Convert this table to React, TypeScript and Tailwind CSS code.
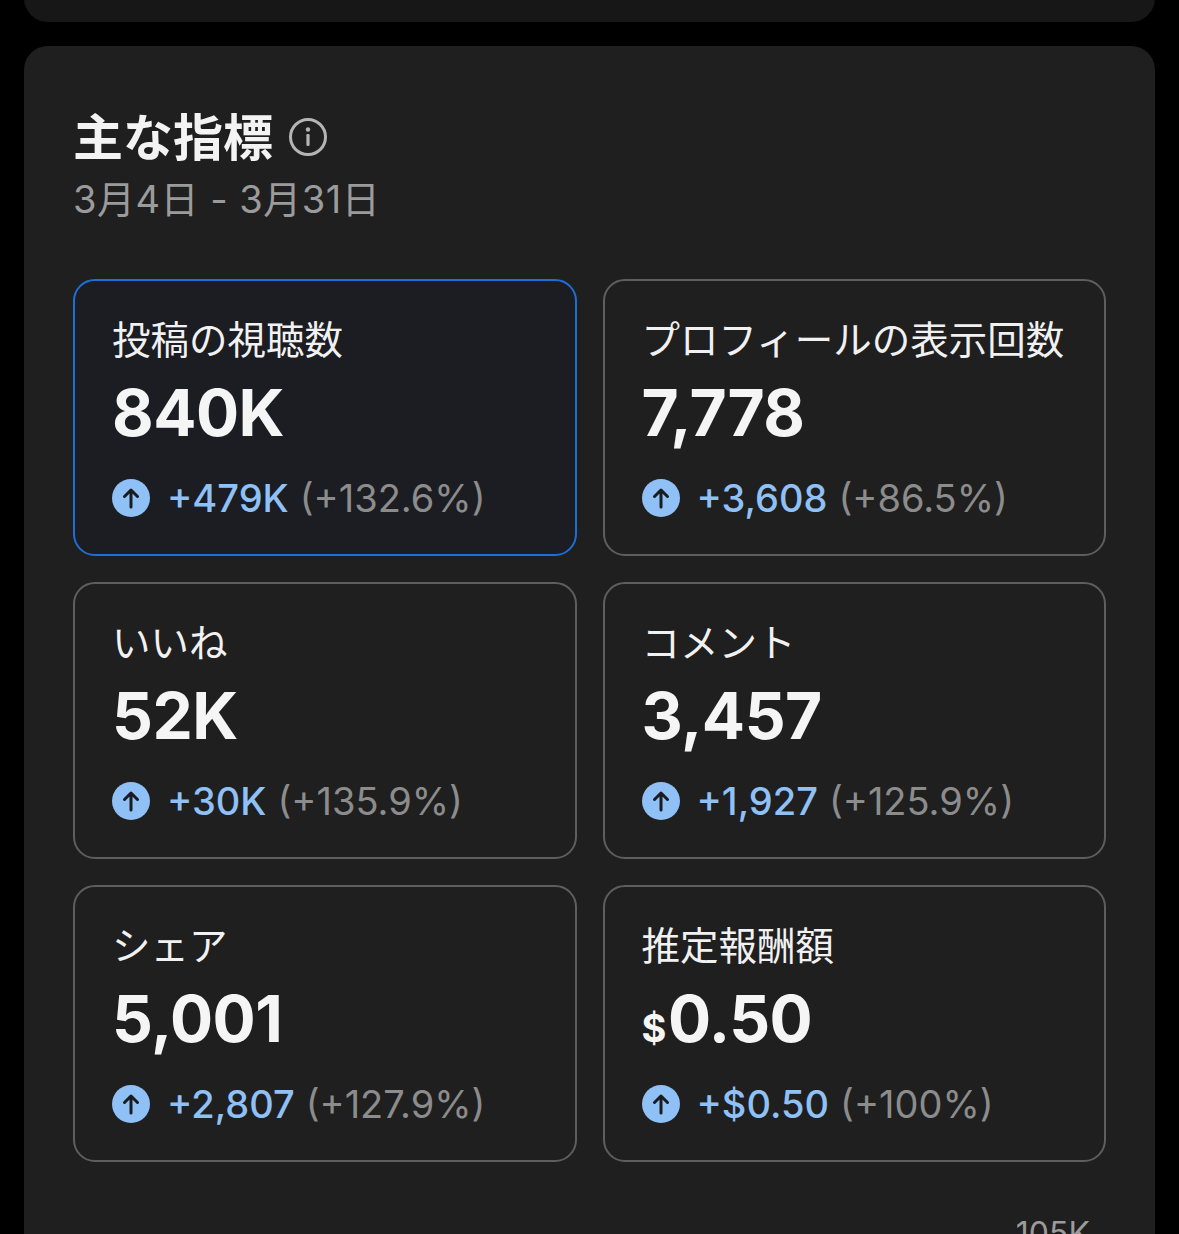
import React from "react";

type Metric = {
  label: string;
  value: string;
  prefix?: string;
  delta: string;
  pct: string;
  active?: boolean;
};

const metrics: Metric[] = [
  { label: "投稿の視聴数", value: "840K", delta: "+479K", pct: "(+132.6%)", active: true },
  { label: "プロフィールの表示回数", value: "7,778", delta: "+3,608", pct: "(+86.5%)" },
  { label: "いいね", value: "52K", delta: "+30K", pct: "(+135.9%)" },
  { label: "コメント", value: "3,457", delta: "+1,927", pct: "(+125.9%)" },
  { label: "シェア", value: "5,001", delta: "+2,807", pct: "(+127.9%)" },
  { label: "推定報酬額", value: "0.50", prefix: "$", delta: "+$0.50", pct: "(+100%)" },
];

const UpIcon = () => (
  <svg width="38" height="38" viewBox="0 0 38 38" className="shrink-0">
    <circle cx="19" cy="19" r="19" fill="#8fc0f6" />
    <path
      d="M19 28V11M12.5 17.5L19 11l6.5 6.5"
      stroke="#1a1c20"
      strokeWidth="3"
      fill="none"
      strokeLinecap="round"
      strokeLinejoin="round"
    />
  </svg>
);

const InfoIcon = () => (
  <svg width="40" height="40" viewBox="0 0 40 40" className="shrink-0">
    <circle cx="20" cy="20" r="17.5" stroke="#b4b4b4" strokeWidth="3" fill="none" />
    <circle cx="20" cy="12.5" r="2.2" fill="#b4b4b4" />
    <rect x="18.4" y="17" width="3.2" height="12" rx="1.2" fill="#b4b4b4" />
  </svg>
);

const MetricCard = ({ m }: { m: Metric }) => (
  <div
    className={
      m.active
        ? "h-[277px] rounded-[22px] border-2 border-[#1d6fd6] bg-[#1b1d22] pl-[37px] pt-[36px]"
        : "h-[277px] rounded-[22px] border-2 border-[#5e5e5e] bg-[#1f1f1f] pl-[37px] pt-[36px]"
    }
  >
    <div className="text-[38.5px] leading-[46px] text-[#f1f1f1] whitespace-nowrap">{m.label}</div>
    <div className="mt-[14px] flex items-baseline h-[72px] text-[64px] leading-[72px] font-bold text-[#f5f5f5] tracking-[-0.5px]">
      {m.prefix && <span className="text-[38px] leading-[40px] mr-[2px]">{m.prefix}</span>}
      {m.value}
    </div>
    <div className="mt-[27px] flex items-center h-[44px] text-[38px] leading-[44px]">
      <UpIcon />
      <span className="ml-[17px] font-medium text-[#8fc0f6]">{m.delta}</span>
      <span className="ml-[11px] text-[#8c8c8c]">{m.pct}</span>
    </div>
  </div>
);

export default function App() {
  return (
    <div
      className="h-[1234px] w-[1179px] overflow-hidden bg-black"
      style={{ fontFamily: 'Inter, "Noto Sans CJK JP", sans-serif' }}
    >
      <div className="mx-[24px] -mt-[30px] h-[52px] rounded-b-[24px] bg-[#171717]" />
      <div className="mx-[24px] mt-[24px] rounded-[24px] bg-[#1f1f1f] px-[49px] pt-[62px] pb-[40px]">
        <div className="flex items-center h-[60px]">
          <h2 className="text-[50px] leading-[60px] font-bold text-[#f3f3f3]">主な指標</h2>
          <span className="ml-[15px] mt-[-2px]">
            <InfoIcon />
          </span>
        </div>
        <div className="mt-[9px] text-[38px] leading-[44px] text-[#9b9b9b] tracking-[0.5px]">
          3月4日 - 3月31日
        </div>
        <div className="mt-[58px] grid grid-cols-2 gap-[26px]">
          {metrics.map((m) => (
            <MetricCard key={m.label} m={m} />
          ))}
        </div>
        <div className="mt-[52px] flex justify-end pr-[16px] text-[32px] leading-[40px] text-[#9b9b9b]">
          105K
        </div>
      </div>
    </div>
  );
}
